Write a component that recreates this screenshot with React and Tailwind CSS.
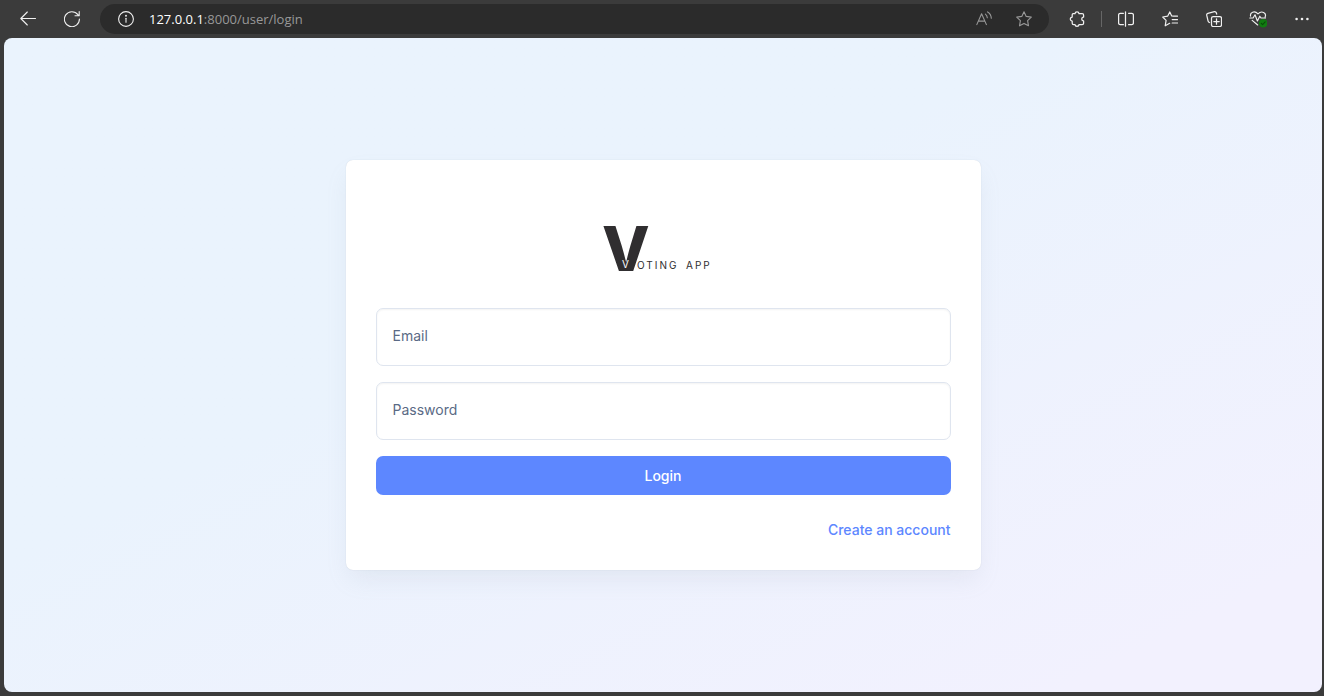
import React from "react";

function Icon({ children, className = "size-4" }) {
  return (
    <svg
      viewBox="0 0 16 16"
      className={className}
      fill="none"
      stroke="currentColor"
      strokeWidth="1.1"
      strokeLinecap="round"
      strokeLinejoin="round"
      aria-hidden="true"
    >
      {children}
    </svg>
  );
}

function ToolButton({ label, children, className = "text-[#f0f0f0]" }) {
  return (
    <button type="button" aria-label={label} className={`flex size-7 shrink-0 items-center justify-center ${className}`}>
      {children}
    </button>
  );
}

function BrowserBar() {
  return (
    <header className="flex h-[38px] shrink-0 items-center bg-[#3b3b3b] pr-2 pl-3.5">
      <div className="flex gap-4">
        <ToolButton label="Back">
          <Icon>
            <path d="M15.5 7.5H.8M7.3 1 .8 7.5 7.3 14" />
          </Icon>
        </ToolButton>
        <ToolButton label="Refresh">
          <Icon>
            <path d="M15.4 8A7.5 7.5 0 1 1 13.9 3.7L14.8 4.7M15.2.6V4.8H11" />
          </Icon>
        </ToolButton>
      </div>

      <div className="ml-3.5 flex h-[30px] min-w-0 flex-1 items-center rounded-full bg-[#2b2b2b] pr-[11px] pl-3">
        <ToolButton label="Site information">
          <Icon>
            <circle cx="8" cy="8" r="7.4" />
            <path d="M8 7.2V11.3" />
            <circle cx="8" cy="4.8" r=".4" fill="currentColor" />
          </Icon>
        </ToolButton>
        <p className="ml-[9px] min-w-0 flex-1 truncate font-['Open_Sans','Noto_Sans',sans-serif] text-[13px] leading-5 text-[#989898]">
          <span className="text-white">127.0.0.1</span>:8000/user/login
        </p>
        <div className="flex gap-3">
          <ToolButton label="Read aloud" className="text-[#989898]">
            <Icon>
              <path d="M.8 13.6 5.6 2.8 10.4 13.6M2.4 10.1H8.8M9.4 3.1C10.6 4 11.2 5.2 11.3 6.7M11.6.9C14 2.3 15.2 4.4 15.3 7.2" />
            </Icon>
          </ToolButton>
          <ToolButton label="Add to favorites" className="text-[#989898]">
            <Icon>
              <path d="m8 .8 2.2 4.6 5.1.7-3.7 3.6.9 5.1L8 12.4l-4.5 2.4.9-5.1L.7 6.1l5.1-.7Z" />
            </Icon>
          </ToolButton>
        </div>
      </div>

      <div className="ml-3.5 flex items-center">
        <ToolButton label="Extensions">
          <Icon>
            <path
              strokeWidth="1.25"
              d="M4.2 2.6H6C6.2.3 9.8.3 10 2.6H13.2Q14.6 2.6 14.6 4V6.1C12.2 6.1 12.2 9.9 14.6 9.9V12.2Q14.6 13.6 13.2 13.6H10C9.8 15.9 6.2 15.9 6 13.6H4.6Q3.2 13.6 3.2 12.2V10.1C.6 9.8.6 6.4 3.2 6.1V3.8Q3.2 2.6 4.2 2.6Z"
            />
          </Icon>
        </ToolButton>
        <span className="mx-2.5 h-4 w-px bg-[#666]" />
        <ToolButton label="Split screen">
          <Icon>
            <path strokeWidth="1.25" d="M5.4 2.3H2.2Q.6 2.3.6 3.9V12.1Q.6 13.7 2.2 13.7H5.4M10.6 2.3H13.8Q15.4 2.3 15.4 3.9V12.1Q15.4 13.7 13.8 13.7H10.6M7.5 .8V15.2" />
          </Icon>
        </ToolButton>
      </div>
      <div className="ml-4 flex gap-4">
        <ToolButton label="Favorites">
          <Icon>
            <path
              strokeWidth="1.2"
              d="M11.7 5.2 9.7 4.9 7.8.9 5.6 5.2.7 6 4.1 9.4 3.2 14.8 7.7 12.3M10.2 5.2H15.5M10.2 8.6H15.5M10.2 12H15.5"
            />
          </Icon>
        </ToolButton>
        <ToolButton label="Collections">
          <Icon>
            <rect x="5.5" y="5.5" width="10" height="10" rx="1.8" strokeWidth="1.25" />
            <path strokeWidth="1.25" d="M10.5 7.8V13.2M7.8 10.5H13.2M3.6 11.5Q2.4 11.4 2.1 10.2L.7 4.2Q.5 2.7 1.9 2.3L8.4.7Q9.9.5 10.3 1.8L10.7 3.2" />
          </Icon>
        </ToolButton>
        <ToolButton label="Browser essentials">
          <svg viewBox="0 0 18 18" className="size-[18px]" fill="none" stroke="currentColor" strokeWidth="1.15" strokeLinecap="round" strokeLinejoin="round" aria-hidden="true">
            <path d="M1.6 6.2C.7 2.6 5.4.1 9 3.9 12.6.1 17.9 2.7 16.1 7M.8 8H4.1L6 4.8 8.4 11 10.8 6.2 12 8H16.5M3.2 10.4 8.7 15" />
            <circle cx="14.2" cy="13.2" r="4.3" fill="#107c10" stroke="none" />
            <path d="m12.3 13.3 1.3 1.3 2.6-2.7" stroke="#084d08" />
          </svg>
        </ToolButton>
        <ToolButton label="Settings and more">
          <Icon>
            <g fill="currentColor" stroke="none">
              <circle cx="2.6" cy="8" r="1.3" />
              <circle cx="8" cy="8" r="1.3" />
              <circle cx="13.4" cy="8" r="1.3" />
            </g>
          </Icon>
        </ToolButton>
      </div>
    </header>
  );
}

function Logo() {
  return (
    <svg viewBox="0 0 120 84" className="h-[84px] w-[120px]" role="img" aria-label="Voting App">
      <text x="-1" y="65" fill="#302e30" className="font-[Inter,sans-serif] text-[62px] font-extrabold">
        V
      </text>
      <text x="19" y="62" fill="#ffffff" className="font-[Inter,sans-serif] text-[10px]">
        V
      </text>
      <text y="63" fill="#302e30" className="font-[Inter,sans-serif] text-[10px] tracking-[2px]">
        <tspan x="34">OTING</tspan>
        <tspan x="83">APP</tspan>
      </text>
    </svg>
  );
}

function Field({ id, type, label }) {
  return (
    <div className="relative">
      <input
        id={id}
        name={id}
        type={type}
        placeholder=" "
        className="peer block h-[58px] w-full rounded-[7px] border border-[#dfe5ef] bg-white px-4 text-sm text-[#5a6a85] shadow-[inset_0_1px_2px_rgba(0,0,0,0.05)] outline-none focus:border-[#5d87ff]"
      />
      <label
        htmlFor={id}
        className="pointer-events-none absolute inset-0 flex items-center border border-transparent px-4 pb-0.5 text-sm text-[#5a6a85] opacity-0 peer-placeholder-shown:opacity-100"
      >
        {label}
      </label>
    </div>
  );
}

export default function App() {
  return (
    <div className="flex min-h-screen flex-col bg-[#3b3b3b] font-[Inter,'Liberation_Sans',sans-serif]">
      <BrowserBar />
      <main className="mr-0.5 mb-1 ml-1 flex flex-1 items-center justify-center rounded-lg bg-linear-to-br from-[#eaf3fd] from-40% to-[#f2f1fe] to-90% p-4">
        <section className="w-full max-w-[635px] rounded-[7px] bg-white px-[30px] pt-[46px] pb-[30px] shadow-[0_0_1px_rgba(145,158,171,0.4),0_12px_24px_-4px_rgba(145,158,171,0.14)]">
          <div className="flex justify-center">
            <Logo />
          </div>
          <form className="mt-[18px] flex flex-col gap-4" onSubmit={(e) => e.preventDefault()}>
            <Field id="email" type="email" label="Email" />
            <Field id="password" type="password" label="Password" />
            <button type="submit" className="h-[39px] rounded-[7px] bg-[#5d87ff] text-sm font-medium text-white">
              Login
            </button>
          </form>
          <p className="mt-[25px] text-right text-sm leading-5">
            <a href="#register" className="font-medium text-[#5d87ff]">
              Create an account
            </a>
          </p>
        </section>
      </main>
    </div>
  );
}
